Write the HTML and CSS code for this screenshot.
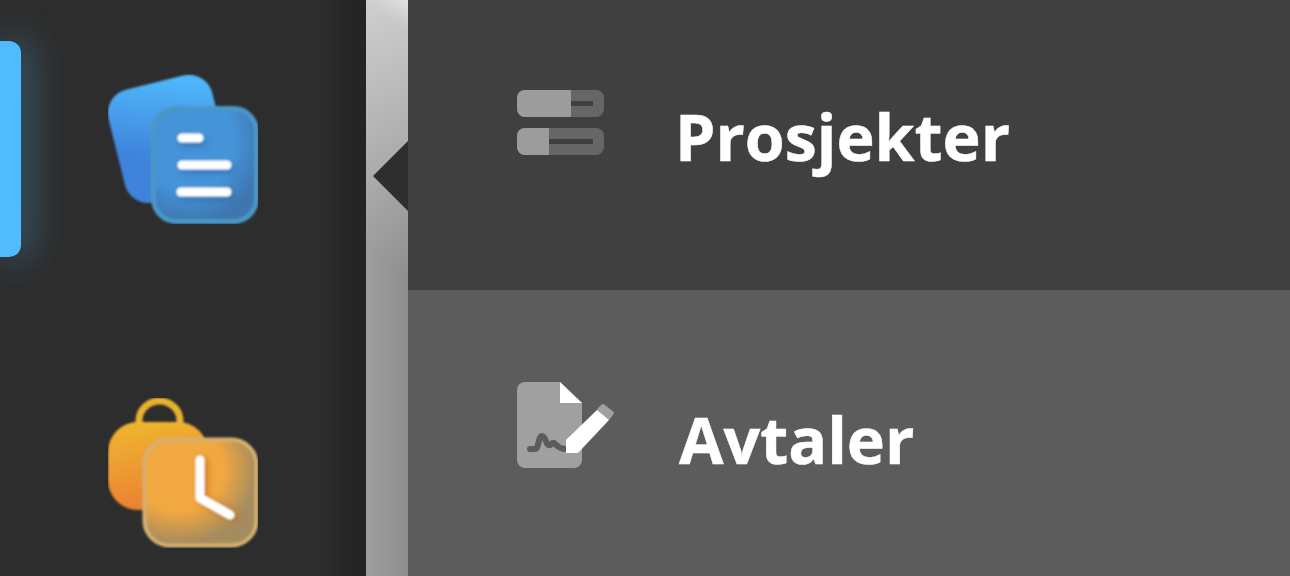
FILE: index.html
```html
<!DOCTYPE html>
<html lang="en">

<head>
    <meta charset="UTF-8">
    <meta name="viewport" content="width=device-width, initial-scale=1.0">
    <title>Prosjekter</title>
    <link rel="stylesheet" href="styles.css">
</head>

<body>
    <div class="app">
        <aside class="sidebar">
            <div class="indicator"></div>
            <div class="apps">
                <svg class="app-icon app-icon-blue" width="150" height="150" viewBox="0 0 150 150">
                    <defs>
                        <linearGradient id="blueBack" x1="0.6" y1="0" x2="0.4" y2="0.65">
                            <stop offset="0" stop-color="#4fb6f9" />
                            <stop offset="1" stop-color="#3f83dc" />
                        </linearGradient>
                        <radialGradient id="blueFront" cx="0.35" cy="0.3" r="0.8">
                            <stop offset="0.55" stop-color="#4593d8" />
                            <stop offset="0.9" stop-color="#3f76ae" />
                        </radialGradient>
                        <radialGradient id="orangeFront" cx="0.3" cy="0.28" r="0.8">
                            <stop offset="0.5" stop-color="#f2a83f" />
                            <stop offset="0.88" stop-color="#a58c5f" />
                        </radialGradient>
                        <linearGradient id="orangeBack" x1="0.3" y1="0" x2="0.5" y2="1">
                            <stop offset="0" stop-color="#efb52f" />
                            <stop offset="1" stop-color="#ea7f32" />
                        </linearGradient>
                        <filter id="soft" x="-10%" y="-10%" width="120%" height="120%">
                            <feGaussianBlur stdDeviation="0.9" />
                        </filter>
                        <filter id="glow" x="-50%" y="-50%" width="200%" height="200%">
                            <feGaussianBlur stdDeviation="3" />
                        </filter>
                    </defs>
                    <g filter="url(#soft)">
                        <rect x="7" y="6" width="107" height="116" rx="24" fill="url(#blueBack)" transform="rotate(-14 64 64)" />
                        <rect x="45.500" y="34.500" width="103" height="113" rx="23" fill="url(#blueFront)" stroke="#4a97c8" stroke-width="5" />
                        <path d="M74 64H91M74 91H119M73 118H119" stroke="#2f6aa8" stroke-width="8" stroke-linecap="round" filter="url(#glow)" opacity="0.7" transform="translate(3 4)" />
                        <path d="M74 64H91M74 91H119M73 118H119" stroke="#fff" stroke-width="9" stroke-linecap="round" />
                    </g>
                </svg>
                <svg class="app-icon" width="150" height="150" viewBox="0 0 150 150">
                    <g filter="url(#soft)">
                        <path d="M31 27V23A20.500 20 0 0 1 72 23V27" fill="none" stroke="#e9b22d" stroke-width="7" />
                        <rect x="0" y="24" width="100" height="88" rx="30" fill="url(#orangeBack)" />
                        <rect x="36.500" y="41.500" width="112" height="106" rx="25" fill="url(#orangeFront)" stroke="#d4b070" stroke-width="4" />
                        <path d="M92 62V100L122 117" fill="none" stroke="#c4691f" stroke-width="9" stroke-linecap="round" filter="url(#glow)" opacity="0.8" transform="translate(3 2)" />
                        <path d="M92 62V100L122 117" fill="none" stroke="#fff" stroke-width="9" stroke-linecap="round" stroke-linejoin="round" />
                    </g>
                </svg>
            </div>
        </aside>

        <div class="divider">
            <span class="divider-arrow"></span>
        </div>

        <main class="menu">
            <a class="menu-row menu-row-active">
                <svg class="menu-icon menu-icon-projects" width="87" height="65" viewBox="0 0 87 65">
                    <rect x="0" y="0" width="87" height="27" rx="8" fill="#666" />
                    <path d="M8 0H54V27H8A8 8 0 0 1 0 19V8A8 8 0 0 1 8 0Z" fill="#9c9c9c" />
                    <rect x="54" y="11" width="22" height="5" fill="#404040" />
                    <rect x="0" y="38" width="87" height="27" rx="8" fill="#666" />
                    <path d="M8 38H32V65H8A8 8 0 0 1 0 57V46A8 8 0 0 1 8 38Z" fill="#9c9c9c" />
                    <rect x="32" y="49" width="44" height="5" fill="#404040" />
                </svg>
                <span class="menu-label menu-label-projects">Prosjekter</span>
            </a>
            <a class="menu-row">
                <svg class="menu-icon menu-icon-deals" width="98" height="87" viewBox="0 0 98 87">
                    <path d="M8 0H43L65 21V78A8 8 0 0 1 57 86H8A8 8 0 0 1 0 78V8A8 8 0 0 1 8 0Z" fill="#a0a0a0" />
                    <path d="M43 0L65 21H43Z" fill="#fff" />
                    <path d="M13 67H18C22 67 21 54 25 54C29 54 29 65 33 63C35 62 35 60 37 61C40 63 41 67 49 67" fill="none" stroke="#5c5c5c" stroke-width="6" stroke-linecap="round" />
                    <path d="M82 28L86 24L95 31L91 36Z" fill="#a0a0a0" stroke="#a0a0a0" stroke-width="4" stroke-linejoin="round" />
                    <path d="M49 71V58L80 28L92 38L61 71Z" fill="#fff" />
                </svg>
                <span class="menu-label menu-label-deals">Avtaler</span>
            </a>
        </main>
    </div>
</body>

</html>
```

FILE: styles.css
```css
html,
body {
    margin: 0;
    height: 100%;
    overflow: hidden;
}

.app {
    display: flex;
    width: 1290px;
    height: 576px;
    font-family: "Open Sans", "Noto Sans", sans-serif;
}

.sidebar {
    width: 366px;
    background: linear-gradient(to right, #2d2d2d 88%, #262626 94%, #242424);
    display: flex;
    overflow: hidden;
}

.indicator {
    flex: none;
    width: 21px;
    height: 216px;
    margin-top: 41px;
    background-color: #50bcfd;
    border-radius: 0 12px 12px 0;
    box-shadow: 6px 0 36px 2px rgba(80, 188, 253, 0.36);
}

.apps {
    display: flex;
    flex-direction: column;
    gap: 174px;
    padding: 74px 0 0 87px;
}

.app-icon {
    display: block;
}

.divider {
    position: relative;
    flex: none;
    width: 42px;
    background:
        linear-gradient(215deg, rgba(255, 255, 255, 0.73) 0%, rgba(255, 255, 255, 0.5) 5%, rgba(255, 255, 255, 0) 46%),
        linear-gradient(to right, #9e9e9e, #8e8e8e);
}

.divider-arrow {
    position: absolute;
    top: 141px;
    right: 0;
    width: 35px;
    height: 70px;
    background-color: #2e2e2e;
    clip-path: polygon(100% 0, 0 50%, 100% 100%);
}

.menu {
    flex: 1;
    display: flex;
    flex-direction: column;
}

.menu-row {
    flex: 1;
    display: flex;
    align-items: center;
    padding-left: 109px;
    background-color: #5c5c5c;
}

.menu-row-active {
    flex: none;
    height: 290px;
    background-color: #404040;
}

.menu-icon {
    flex: none;
}

.menu-icon-projects {
    margin-bottom: 45px;
}

.menu-icon-deals {
    margin-bottom: 15px;
}

.menu-label {
    color: #fff;
    font-size: 64.500px;
    font-weight: 700;
    -webkit-text-stroke: 0.5px #fff;
}

.menu-label-projects {
    margin-left: 71px;
    margin-bottom: 19px;
}

.menu-label-deals {
    margin-left: 64px;
    margin-top: 11px;
}
```
